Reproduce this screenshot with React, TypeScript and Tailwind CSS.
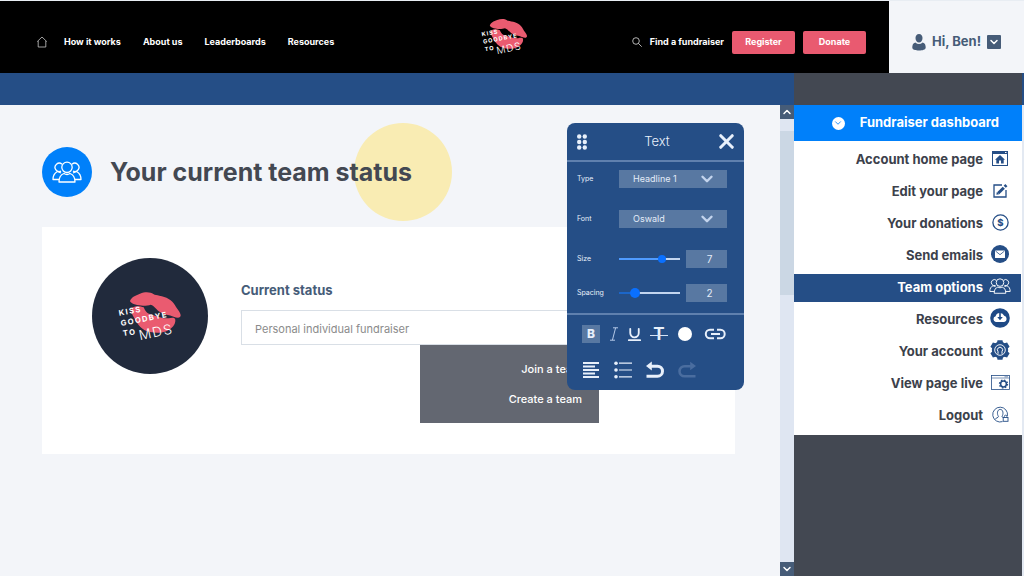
import { useState } from "react";
import type { ReactNode } from "react";
import { ChevronDown, ChevronUp, Underline, X } from "lucide-react";

function LipsLogo({ className }: { className: string }) {
  return (
    <svg viewBox="0 0 192 150" className={`overflow-visible ${className}`} role="img" aria-label="Kiss Goodbye to MDS">
      <path
        fill="#ea5b70"
        d="M36 31C38 20 52 13 66 8C82 1 98 3 106 9C111 13 117 11 124 14C144 17 163 27 171 43C176 54 187 62 188 73C188 82 178 82 167 77C153 71 139 72 127 64C114 55 110 45 98 41C84 46 45 46 36 31Z"
      />
      <path
        fill="#ea5b70"
        d="M41 51C52 43 67 46 77 49C82 59 85 68 101 71C119 77 136 83 152 82C162 80 171 79 172 87C173 100 162 113 148 119C128 129 98 126 79 117C61 106 53 89 47 78C42 70 38 60 41 51Z"
      />
      <g fill="#fff" fontFamily="Inter, sans-serif" fontWeight="700" fontSize="23">
        <text transform="translate(4 74) rotate(-10)" letterSpacing="4">KISS</text>
        <text transform="translate(10 105) rotate(-11)" letterSpacing="4">GOODBYE</text>
        <text transform="translate(16 135) rotate(-8)" letterSpacing="4">TO</text>
        <text transform="translate(66 148) rotate(-12)" fontSize="41" fontWeight="300" letterSpacing="4">
          MDS
        </text>
      </g>
    </svg>
  );
}

function TeamIcon({ className }: { className: string }) {
  return (
    <svg viewBox="0 0 30 22" className={className} fill="none" stroke="currentColor" strokeWidth="1.3" strokeLinejoin="round">
      <circle cx="15" cy="6.3" r="5.2" />
      <path d="M7 21C7 16 9 13.5 12 12.5Q15 14.5 18 12.5C21 13.5 23 16 23 21Z" />
      <path d="M10 3.2A4.2 4.2 0 1 0 9 10.2M20 3.2A4.2 4.2 0 1 1 21 10.2" />
      <path d="M7.2 18.5H1C1 14.5 2.5 12 5.5 10.5L9 12M22.8 18.5H29C29 14.5 27.5 12 24.5 10.5L21 12" />
    </svg>
  );
}

const HomePageIcon = (
  <svg viewBox="0 0 16 15" className="h-[15px] w-4" fill="#254e86">
    <path fillRule="evenodd" d="M0 0H16V15H0ZM1 3V14H15V3ZM13 1V2H14.5V1Z" />
    <path d="M8 4L13 8.7H11.7V12.5H9V9.5H7V12.5H4.3V8.7H3Z" />
  </svg>
);

const EditIcon = (
  <svg viewBox="0 0 15 15" className="size-[15px]" fill="none" stroke="#254e86">
    <path d="M9 2H1V14H13V7" strokeWidth="1.3" />
    <path d="M5.2 10.3L10.8 4.7" strokeWidth="3" />
    <path d="M11.7 3.8L13.4 2.1" strokeWidth="3" />
    <path d="M3.8 8.9L3.4 11.8L6.3 11.3Z" fill="#254e86" stroke="none" />
  </svg>
);

const DonationIcon = (
  <svg viewBox="0 0 17 17" className="size-[17px]">
    <circle cx="8.5" cy="8.5" r="7.6" fill="none" stroke="#254e86" strokeWidth="1.3" />
    <text x="8.5" y="12" textAnchor="middle" fontFamily="Inter, sans-serif" fontSize="9.5" fontWeight="800" fill="#254e86">
      $
    </text>
  </svg>
);

const EmailIcon = (
  <svg viewBox="0 0 18 18" className="size-[18px]">
    <circle cx="9" cy="9" r="9" fill="#254e86" />
    <rect x="4" y="5.5" width="10" height="7.5" rx="0.5" fill="#fff" />
    <path d="M4.5 6L9 9.7L13.5 6" fill="none" stroke="#254e86" strokeWidth="0.8" />
  </svg>
);

const CloudIcon = (
  <svg viewBox="0 0 20 20" className="size-5">
    <circle cx="10" cy="10" r="9.8" fill="#1f4a86" />
    <path d="M5.8 14A3 3 0 0 1 5.6 8.2A4.6 4.6 0 0 1 14.2 7.8A3.2 3.2 0 0 1 14.2 14Z" fill="#fff" />
    <path d="M9.2 5V9H7.2L10 12.2L12.8 9H10.8V5Z" fill="#1f4a86" />
  </svg>
);

const AccountIcon = (
  <svg viewBox="0 0 20 20" className="size-5">
    <g fill="#254e86">
      <circle cx="10" cy="10" r="8.2" />
      <path d="M7.5 0.3H12.5L13.3 4H6.7ZM7.5 19.7H12.5L13.3 16H6.7Z" />
      <path d="M0.4 6.8L2.9 2.5L6.5 3.6L3.2 9.3ZM19.6 6.8L17.1 2.5L13.5 3.6L16.8 9.3Z" />
      <path d="M0.4 13.2L2.9 17.5L6.5 16.4L3.2 10.7ZM19.6 13.2L17.1 17.5L13.5 16.4L16.8 10.7Z" />
    </g>
    <circle cx="10" cy="10" r="5.3" fill="none" stroke="#fff" strokeWidth="0.9" />
    <path d="M8 13.8V11.5A2.6 2.6 0 1 1 12 11.5V13.8" fill="none" stroke="#fff" strokeWidth="1" />
  </svg>
);

const ViewLiveIcon = (
  <svg viewBox="0 0 19 15" className="h-[15px] w-[19px]" fill="none" stroke="#254e86">
    <rect x="0.5" y="0.5" width="18" height="14" strokeWidth="0.8" />
    <path d="M0.5 3H18.5" strokeWidth="0.6" />
    <path d="M13.5 1.8H17" strokeWidth="0.6" />
    <circle cx="12.5" cy="9" r="2.9" strokeWidth="1.5" />
    <circle cx="12.5" cy="9" r="4" strokeWidth="1.3" strokeDasharray="1.57 1.57" />
  </svg>
);

const LogoutIcon = (
  <svg viewBox="0 0 17 17" className="size-[17px]" fill="none" stroke="#254e86" strokeWidth="0.9">
    <path d="M10.5 15.6A7.4 7.4 0 1 1 15.4 10" />
    <path d="M3 13.5C3.5 11.8 6.5 12 6.5 10.3C4.8 8.5 5 3.4 8.2 3.4C11.4 3.4 11.6 8.3 10 10.3C10 11 10.5 11.3 11 11.5" />
    <rect x="11.2" y="11.5" width="4.8" height="3.8" />
    <path d="M12.3 11.5V10.5A1.3 1.3 0 0 1 14.9 10.5V11.5" />
  </svg>
);

const menuItems: { label: string; icon: ReactNode }[] = [
  { label: "Account home page", icon: HomePageIcon },
  { label: "Edit your page", icon: EditIcon },
  { label: "Your donations", icon: DonationIcon },
  { label: "Send emails", icon: EmailIcon },
  { label: "Team options", icon: <TeamIcon className="h-4 w-[22px]" /> },
  { label: "Resources", icon: CloudIcon },
  { label: "Your account", icon: AccountIcon },
  { label: "View page live", icon: ViewLiveIcon },
  { label: "Logout", icon: LogoutIcon },
];

function Header() {
  return (
    <header className="flex h-[73px] shrink-0 border-t border-[#e8edf3]">
      <div className="flex flex-1 items-center bg-black pt-2.5 pr-[23px] pl-9 text-[9px] font-bold text-white">
        <nav className="flex items-center gap-[22px]">
          <a href="#home" aria-label="Home" className="-mr-1.5">
            <svg viewBox="0 0 12 12" className="size-3" fill="none" stroke="#c8c8c8" strokeWidth="0.8">
              <path d="M1.2 5.6L6 1L10.8 5.6M2.2 5V11H9.8V5" />
            </svg>
          </a>
          <a href="#how">How it works</a>
          <a href="#about">About us</a>
          <a href="#leaderboards">Leaderboards</a>
          <a href="#resources">Resources</a>
        </nav>
        <a href="#top" className="mr-[104px] mb-3 ml-auto">
          <LipsLogo className="h-[37px] w-[47px]" />
        </a>
        <div className="flex items-center gap-2">
          <a href="#find" className="flex items-center gap-2">
            <svg viewBox="0 0 10 10" className="size-2.5" fill="none" stroke="#ddd" strokeWidth="0.8">
              <circle cx="4" cy="4" r="3.3" />
              <path d="M6.4 6.4L9.7 9.7" />
            </svg>
            Find a fundraiser
          </a>
          <button className="h-[23px] w-[63px] rounded-xs bg-[#e95a70]">Register</button>
          <button className="h-[23px] w-[63px] rounded-xs bg-[#e95a70]">Donate</button>
        </div>
      </div>
      <div className="flex w-[135px] items-center justify-center gap-1.5 bg-[#f3f5f9] pt-2.5 text-[#465c78]">
        <svg viewBox="0 0 14 17" className="h-[17px] w-3.5" fill="currentColor">
          <path d="M7 0C9.3 0 10.5 1.7 10.5 4C10.5 6.5 9 8.5 7 8.5C5 8.5 3.5 6.5 3.5 4C3.5 1.7 4.7 0 7 0Z" />
          <path d="M3.3 8.4Q7 11.4 10.7 8.4C13 9 13.7 11 13.7 13.6C13.7 15.8 10.5 16.6 7 16.6C3.5 16.6 0.3 15.8 0.3 13.6C0.3 11 1 9 3.3 8.4Z" />
        </svg>
        <span className="text-[13px] font-bold">Hi, Ben!</span>
        <button aria-label="Account menu" className="flex size-3.5 items-center justify-center rounded-[1px] bg-[#465c78] text-white">
          <ChevronDown size={12} strokeWidth={3} />
        </button>
      </div>
    </header>
  );
}

function TextPanel() {
  const [size, setSize] = useState(74);
  const [spacing, setSpacing] = useState(22);

  const select = "h-[18px] w-full appearance-none bg-[#5878a2] pl-3.5 text-[9px] text-[#e3ecf8]";
  const number = "h-[18px] w-[41px] bg-[#5878a2] pl-1.5 text-center text-[10px] text-[#e3ecf8]";
  const range =
    "h-[2px] w-[61px] appearance-none [&::-webkit-slider-thumb]:appearance-none [&::-webkit-slider-thumb]:rounded-full [&::-webkit-slider-thumb]:bg-[#0a70ff]";

  return (
    <section
      aria-label="Text"
      className="absolute top-[18px] right-9 z-10 w-[177px] rounded-lg bg-[#254e86] text-[#e8f0fb]"
    >
      <div className="flex h-[39px] items-center justify-between border-b-2 border-[#5f80ae] pr-1.5 pl-2.5">
        <svg viewBox="0 0 10 16" className="h-4 w-2.5" fill="currentColor">
          <circle cx="2.2" cy="2.5" r="2.2" />
          <circle cx="7.8" cy="2.5" r="2.2" />
          <circle cx="2.2" cy="8" r="2.2" />
          <circle cx="7.8" cy="8" r="2.2" />
          <circle cx="2.2" cy="13.5" r="2.2" />
          <circle cx="7.8" cy="13.5" r="2.2" />
        </svg>
        <h2 className="text-[13px] font-light">Text</h2>
        <button aria-label="Close" className="-ml-3">
          <X size={23} strokeWidth={3.2} />
        </button>
      </div>

      <div className="flex flex-col gap-[22px] pt-2 pr-[17px] pl-2.5 text-[7px]">
        <div className="flex items-center">
          <label htmlFor="type" className="w-[42px]">Type</label>
          <div className="relative flex-1">
            <select id="type" className={select}>
              <option>Headline 1</option>
            </select>
            <ChevronDown size={18} strokeWidth={3.2} className="pointer-events-none absolute top-0 right-[11px] text-[#c3d4ed]" />
          </div>
        </div>
        <div className="flex items-center">
          <label htmlFor="font" className="w-[42px]">Font</label>
          <div className="relative flex-1">
            <select id="font" className={select}>
              <option>Oswald</option>
            </select>
            <ChevronDown size={18} strokeWidth={3.2} className="pointer-events-none absolute top-0 right-[11px] text-[#c3d4ed]" />
          </div>
        </div>
        <div className="flex flex-col gap-4">
          <div className="flex items-center justify-between">
            <label htmlFor="size" className="w-8 whitespace-nowrap">Size</label>
            <input
              id="size"
              type="range"
              value={size}
              onChange={(e) => setSize(Number(e.target.value))}
              className={`${range} ml-auto [&::-webkit-slider-thumb]:size-2`}
              style={{ background: `linear-gradient(90deg, #4f9bff ${size}%, #c3d5ef ${size}%)` }}
            />
            <input aria-label="Size value" defaultValue="7" className={`${number} ml-1.5`} />
          </div>
          <div className="flex items-center justify-between">
            <label htmlFor="spacing" className="w-8 whitespace-nowrap">Spacing</label>
            <input
              id="spacing"
              type="range"
              value={spacing}
              onChange={(e) => setSpacing(Number(e.target.value))}
              className={`${range} ml-auto [&::-webkit-slider-thumb]:size-2.5`}
              style={{ background: `linear-gradient(90deg, #1c66c8 ${spacing}%, #c3d5ef ${spacing}%)` }}
            />
            <input aria-label="Spacing value" defaultValue="2" className={`${number} ml-1.5`} />
          </div>
        </div>
      </div>

      <div className="mt-[11px] flex flex-col gap-[18px] border-t-2 border-[#5f80ae] px-[15px] pt-2.5 pb-[11px]">
        <div className="flex h-[18px] items-center gap-2.5">
          <button className="size-[18px] bg-[#5878a2] text-xs leading-[18px] font-extrabold">B</button>
          <button aria-label="Italic">
            <svg viewBox="0 0 8 14" className="h-3.5 w-2" fill="none" stroke="#b4c9e8" strokeWidth="1">
              <path d="M3 0.8H8M0 13.2H5M5.6 0.8L2.4 13.2" />
            </svg>
          </button>
          <button aria-label="Underline" className="flex w-3 justify-center">
            <Underline size={17} strokeWidth={2.6} className="shrink-0" />
          </button>
          <button aria-label="Strikethrough" className="relative w-[18px] text-[17px] leading-[18px] font-bold">
            T
            <span className="absolute inset-x-0 top-2.5 h-px bg-[#d5e3f6]" />
          </button>
          <button aria-label="Text colour" className="size-3.5 rounded-full bg-white" />
          <button aria-label="Link">
            <svg viewBox="0 0 24 12" className="h-3 w-6" fill="none" stroke="currentColor" strokeWidth="2">
              <path d="M12 1.8H8A4.2 4.2 0 0 0 8 10.2H12M15 1.8H18.5A4.2 4.2 0 0 1 18.5 10.2H15M9 6H18" />
            </svg>
          </button>
        </div>
        <div className="flex h-[18px] items-center gap-3.5">
          <button aria-label="Align left">
            <svg viewBox="0 0 18 18" className="size-[18px]" stroke="currentColor" strokeWidth="1.8">
              <path d="M1 2H17M1 5.5H13M1 9H17M1 12.5H13M1 16H17" />
            </svg>
          </button>
          <button aria-label="Bullet list">
            <svg viewBox="0 0 18 18" className="size-[18px]" stroke="currentColor" fill="currentColor">
              <path d="M5 2.2H18M5 9H18M5 15.8H18" strokeWidth="1.2" />
              <g stroke="none">
                <circle cx="2" cy="2.2" r="1.8" />
                <circle cx="2" cy="9" r="1.8" />
                <circle cx="2" cy="15.8" r="1.8" />
              </g>
            </svg>
          </button>
          <button aria-label="Undo">
            <svg viewBox="0 0 18 18" className="size-[18px]">
              <path d="M4 5.2H11.5A5 5 0 0 1 11.5 15.2H0.5" fill="none" stroke="currentColor" strokeWidth="3" />
              <path d="M0 5L5.8 0.6V9.4Z" fill="currentColor" />
            </svg>
          </button>
          <button aria-label="Redo" className="text-[#4a6d9f]">
            <svg viewBox="0 0 18 18" className="size-[18px]">
              <path d="M14 5.2H6.5A5 5 0 0 0 6.5 15.2H17.5" fill="none" stroke="currentColor" strokeWidth="2.6" />
              <path d="M18 5L12.2 0.8V9.2Z" fill="currentColor" />
            </svg>
          </button>
        </div>
      </div>
    </section>
  );
}

function Sidebar() {
  return (
    <aside className="w-[230px] shrink-0 border-r-2 border-[#e3e9f2] bg-[#434852]">
      <button className="flex h-9 w-full items-center justify-end gap-[15px] bg-[#0080fa] pr-[23px] text-[13px] font-bold text-white">
        <span className="flex size-[13px] items-center justify-center rounded-full bg-white text-[#0080fa]">
          <ChevronDown size={10} strokeWidth={2} />
        </span>
        Fundraiser dashboard
      </button>
      <nav className="flex flex-col gap-1 bg-white py-[5px]">
        {menuItems.map(({ label, icon }) => (
          <a
            key={label}
            href="#menu"
            className={`flex h-7 items-center justify-end gap-[5px] text-[13px] font-bold ${
              label === "Team options" ? "mr-px bg-[#254e86] pr-[9px] text-white" : "pr-2.5 text-[#3c414b]"
            }`}
          >
            {label}
            <span className="flex w-6 justify-center pb-1">{icon}</span>
          </a>
        ))}
      </nav>
    </aside>
  );
}

export default function App() {
  return (
    <div className="flex min-h-screen flex-col bg-[#f3f5f9] font-['Inter',sans-serif]">
      <Header />
      <div className="flex h-8 shrink-0">
        <div className="flex-1 bg-[#254e86]" />
        <div className="w-[230px] border-r-2 border-[#254e86] bg-[#434852]" />
      </div>

      <div className="flex flex-1">
        <main className="relative min-w-0 flex-1 pt-[42px] pr-[45px] pl-[42px]">
          <div className="flex items-center gap-[18px]">
            <span className="flex size-[50px] items-center justify-center rounded-full bg-[#0080fa] text-white">
              <TeamIcon className="h-[22px] w-[30px]" />
            </span>
            <h1 className="relative z-0 text-[25px] leading-8 font-bold text-[#434852]">
              <span className="absolute -top-[33px] -right-10 -z-10 size-[98px] rounded-full bg-[#f9ecb3]" />
              Your current team status
            </h1>
          </div>

          <section className="mt-[30px] flex h-[227px] gap-[33px] bg-white pt-[31px] pl-[50px]">
            <div className="flex size-[116px] shrink-0 items-center justify-center rounded-full bg-[#212a3c]">
              <LipsLogo className="h-[50px] w-16" />
            </div>
            <div className="w-[358px] pt-[22px]">
              <label htmlFor="status" className="block text-[13px] leading-5 font-bold text-[#465c78]">
                Current status
              </label>
              <div className="relative mt-2.5">
                <input
                  id="status"
                  readOnly
                  value="Personal individual fundraiser"
                  className="block h-[35px] w-full border border-[#d9dfe6] px-[13px] pt-0.5 text-[11px] text-[#8b8b8b]"
                />
                <div className="absolute top-full right-0 flex h-[78px] w-[179px] flex-col items-end justify-center gap-3 bg-[#636771] pr-[17px] text-[11px] leading-[18px] font-medium text-white">
                  <button>Join a team</button>
                  <button>Create a team</button>
                </div>
              </div>
            </div>
          </section>

          <TextPanel />
        </main>

        <div className="flex w-3.5 flex-col bg-[#dfe6f2]">
          <button aria-label="Scroll up" className="flex h-3.5 items-center justify-center bg-[#465c78] text-white">
            <ChevronUp size={12} strokeWidth={3} />
          </button>
          <div className="mt-3 h-[164px] bg-[#cbd7e4]" />
          <button aria-label="Scroll down" className="mt-auto flex h-3.5 items-center justify-center bg-[#465c78] text-white">
            <ChevronDown size={12} strokeWidth={3} />
          </button>
        </div>

        <Sidebar />
      </div>
    </div>
  );
}
